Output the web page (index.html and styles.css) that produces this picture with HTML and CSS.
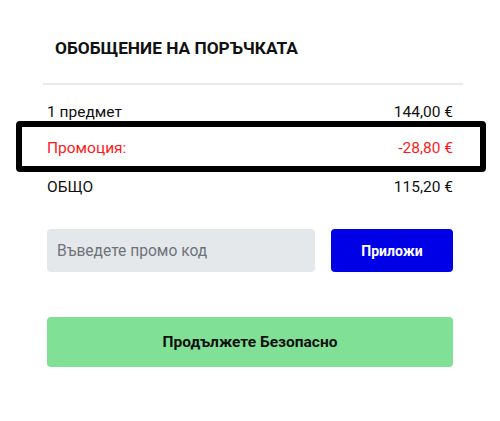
FILE: index.html
```html
<!DOCTYPE html>
<html lang="bg">
<head>
<meta charset="utf-8">
<link rel="stylesheet" href="styles.css">
</head>
<body>
<section class="summary">
  <h2 class="title">ОБОБЩЕНИЕ НА ПОРЪЧКАТА</h2>
  <hr class="divider">
  <div class="rows">
    <div class="row row-items"><span>1 предмет</span><span>144,00 €</span></div>
    <div class="row row-promo"><span>Промоция:</span><span>-28,80 €</span></div>
    <div class="row row-total"><span>ОБЩО</span><span>115,20 €</span></div>
  </div>
  <form class="promo-form">
    <input class="promo-input" type="text" placeholder="Въведете промо код">
    <button class="apply-btn" type="button">Приложи</button>
  </form>
  <button class="checkout-btn" type="button">Продължете Безопасно</button>
</section>
</body>
</html>
```
FILE: styles.css
```css
* { box-sizing: border-box; }
html, body { margin: 0; padding: 0; background: #fff; }
body {
  font-family: Roboto, "Liberation Sans", sans-serif;
  color: #111;
}
.summary {
  width: 420px;
  margin-left: 43px;
  padding-top: 38px;
}
.title {
  margin: 0;
  padding-left: 12px;
  font-size: 17.3px;
  font-weight: 700;
  line-height: 20px;
  color: #111;
}
.divider {
  margin: 25px 0 0;
  border: 0;
  height: 2px;
  background: #e8eaee;
}
.rows {
  padding: 17px 10px 0 4px;
}
.row {
  display: flex;
  justify-content: space-between;
  font-size: 15.5px;
  line-height: 20px;
}
.row-promo {
  position: relative;
  margin-top: 16px;
  color: #ff1a1a;
}
.row-promo::after {
  content: "";
  position: absolute;
  left: -31px;
  right: -33px;
  top: -17px;
  bottom: -14px;
  border: 6px solid #000;
  border-radius: 4px;
}
.row-total {
  margin-top: 19px;
}
.promo-form {
  display: flex;
  gap: 16px;
  margin: 32px 10px 0 4px;
}
.promo-input {
  flex: 1;
  height: 43px;
  border: 0;
  border-radius: 4px;
  background: #e5e8eb;
  padding: 0 10px;
  font-family: inherit;
  font-size: 15.6px;
  color: #111;
  outline: none;
}
.promo-input::placeholder { color: #6e737a; }
.apply-btn {
  width: 122px;
  height: 43px;
  border: 0;
  border-radius: 4px;
  background: #0000e6;
  color: #fff;
  font-family: inherit;
  font-size: 14px;
  font-weight: 700;
}
.checkout-btn {
  display: block;
  width: 406px;
  height: 50px;
  margin: 45px 0 0 4px;
  border: 0;
  border-radius: 4px;
  background: #80e096;
  color: #111;
  font-family: inherit;
  font-size: 15.5px;
  font-weight: 700;
}
```
